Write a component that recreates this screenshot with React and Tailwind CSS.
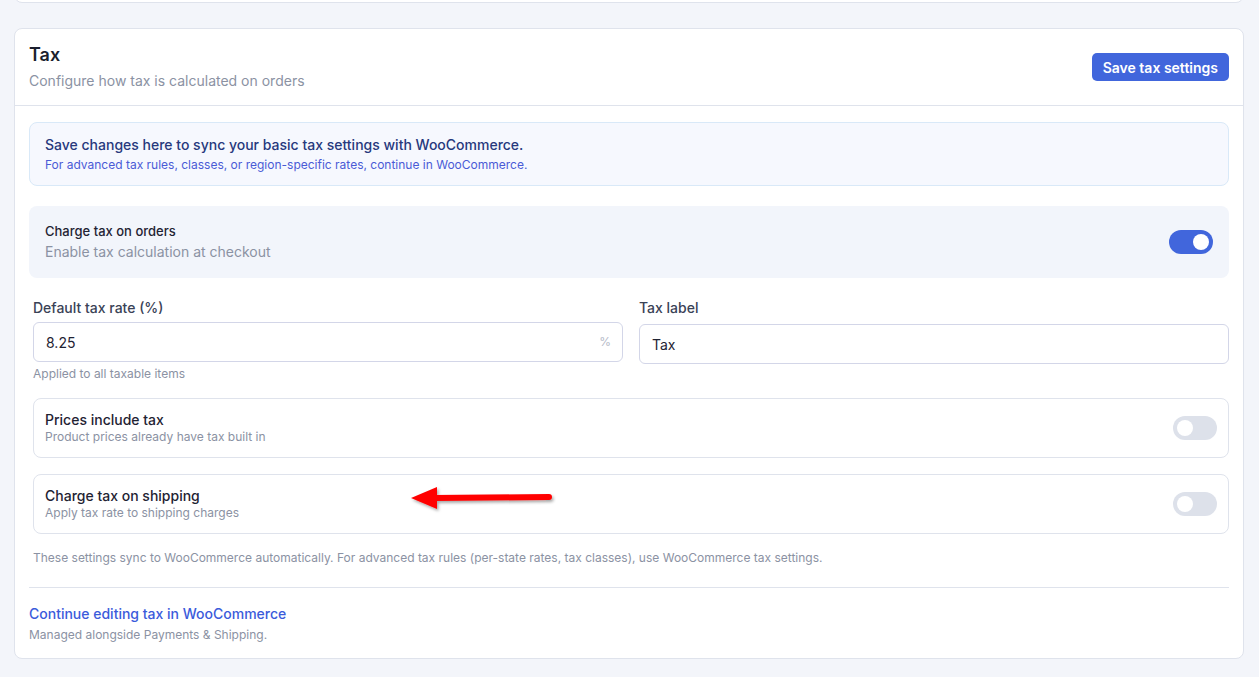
import React, { useState } from 'react';

const Toggle = ({ on, onChange }) => (
  <button
    type="button"
    onClick={() => onChange(!on)}
    className={`relative flex h-6 w-11 shrink-0 items-center rounded-full px-1 transition ${
      on ? 'bg-[#4166dc] justify-end' : 'bg-[#dde1ea] justify-start'
    }`}
  >
    <span className="block h-4 w-4 rounded-full bg-white" />
  </button>
);

const ToggleRow = ({ title, desc, on, onChange, children }) => (
  <div className="relative flex items-center justify-between rounded-lg border border-[#dfe3ec] bg-white py-3 pl-[11px] pr-[11px]">
    <div className="flex flex-col">
      <span className="text-[14px] leading-[18px] font-medium text-[#1f2333]">{title}</span>
      <span className="text-[12px] leading-4 text-[#8b92a3]">{desc}</span>
    </div>
    <Toggle on={on} onChange={onChange} />
    {children}
  </div>
);

const App = () => {
  const [chargeOrders, setChargeOrders] = useState(true);
  const [pricesInclude, setPricesInclude] = useState(false);
  const [chargeShipping, setChargeShipping] = useState(false);
  const [rate, setRate] = useState('8.25');
  const [label, setLabel] = useState('Tax');

  return (
    <div
      className="min-h-screen bg-[#f3f5fa] pl-3.5 pr-[15px] pb-6"
      style={{ fontFamily: 'Inter, "Noto Sans", Arial, sans-serif' }}
    >
      {/* previous card, scrolled mostly out of view */}
      <div className="-mt-[37px] h-10 rounded-lg border border-[#dfe3ec] bg-white" />

      <div className="mt-[25px] rounded-lg border border-[#dfe3ec] bg-white">
        {/* header */}
        <div className="flex items-center justify-between border-b border-[#dfe3ec] px-3.5 py-3.5">
          <div className="flex flex-col gap-1">
            <h2 className="text-[18px] leading-6 font-semibold text-[#1a1f2e]">Tax</h2>
            <p className="text-[14px] leading-5 text-[#8b92a3]">Configure how tax is calculated on orders</p>
          </div>
          <button className="h-7 rounded-[5px] bg-[#4166dc] px-[11px] text-[14px] font-semibold text-white">
            Save tax settings
          </button>
        </div>

        {/* body */}
        <div className="flex flex-col px-3.5 pt-4 pb-[15px]">
          <div className="rounded-lg border border-[#d9e9f8] bg-[#f6f8fe] px-[15px] py-3">
            <p className="text-[14px] leading-5 font-medium text-[#27397d]">
              Save changes here to sync your basic tax settings with WooCommerce.
            </p>
            <p className="mt-0.5 text-[12px] leading-4 text-[#4a5bd6]">
              For advanced tax rules, classes, or region-specific rates, continue in WooCommerce.
            </p>
          </div>

          <div className="mt-5 flex items-center justify-between rounded-lg bg-[#f2f5fb] py-4 pl-4 pr-4">
            <div className="flex flex-col gap-0.5">
              <span className="text-[13px] leading-[18px] font-medium text-[#1f2333]">Charge tax on orders</span>
              <span className="text-[14px] leading-5 text-[#8b92a3]">Enable tax calculation at checkout</span>
            </div>
            <Toggle on={chargeOrders} onChange={setChargeOrders} />
          </div>

          <div className="mt-5 flex flex-col pl-1">
            <div className="grid grid-cols-2 gap-4">
              <div className="flex flex-col">
                <label className="text-[14px] leading-5 font-medium text-[#3a4256]">Default tax rate (%)</label>
                <div className="relative mt-1">
                  <input
                    value={rate}
                    onChange={(e) => setRate(e.target.value)}
                    className="h-10 w-full rounded-md border border-[#d3d6e8] bg-white pl-3 pr-8 text-[14px] text-[#1f2333] outline-none"
                  />
                  <span className="pointer-events-none absolute right-3 top-1/2 -translate-y-1/2 text-[12px] text-[#b5bac8]">%</span>
                </div>
                <span className="mt-1 text-[12px] leading-4 text-[#8b92a3]">Applied to all taxable items</span>
              </div>
              <div className="flex flex-col">
                <label className="text-[14px] leading-5 font-medium text-[#3a4256]">Tax label</label>
                <input
                  value={label}
                  onChange={(e) => setLabel(e.target.value)}
                  className="mt-1.5 h-10 w-full rounded-md border border-[#d3d6e8] bg-white px-3 text-[14px] text-[#1f2333] outline-none"
                />
              </div>
            </div>

            <div className="mt-4 flex flex-col gap-4">
              <ToggleRow
                title="Prices include tax"
                desc="Product prices already have tax built in"
                on={pricesInclude}
                onChange={setPricesInclude}
              />
              <ToggleRow
                title="Charge tax on shipping"
                desc="Apply tax rate to shipping charges"
                on={chargeShipping}
                onChange={setChargeShipping}
              >
                {/* annotation arrow */}
                <svg
                  className="pointer-events-none absolute left-[372px] top-[8px]"
                  width="150"
                  height="34"
                  viewBox="0 0 150 34"
                >
                  <defs>
                    <filter id="arrowShadow" x="-10%" y="-30%" width="120%" height="180%">
                      <feDropShadow dx="1.5" dy="2" stdDeviation="1.5" floodColor="#000" floodOpacity="0.35" />
                    </filter>
                  </defs>
                  <g filter="url(#arrowShadow)">
                    <line x1="28" y1="15" x2="143" y2="14" stroke="#ff0000" strokeWidth="6" strokeLinecap="round" />
                    <polygon points="5,15 31,4 31,26" fill="#ff0000" />
                  </g>
                </svg>
              </ToggleRow>
            </div>

            <p className="mt-4 text-[12px] leading-4 text-[#8b92a3]">
              These settings sync to WooCommerce automatically. For advanced tax rules (per-state rates, tax classes), use WooCommerce tax settings.
            </p>
          </div>

          <div className="mt-[21px] border-t border-[#dfe3ec]" />

          <a href="#" className="mt-4 text-[14px] leading-5 font-medium text-[#3b5bdb]">
            Continue editing tax in WooCommerce
          </a>
          <span className="mt-[3px] text-[12px] leading-4 text-[#8b92a3]">Managed alongside Payments &amp; Shipping.</span>
        </div>
      </div>
    </div>
  );
};

export default App;
